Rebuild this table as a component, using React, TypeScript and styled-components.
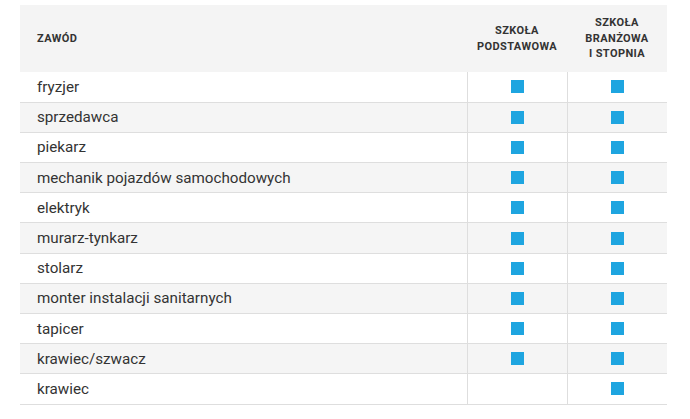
import React from "react";
import styled, { createGlobalStyle } from "styled-components";

const Global = createGlobalStyle`
  html, body { margin: 0; padding: 0; background: #fff; }
  body { font-family: Roboto, "Noto Sans", sans-serif; color: #333; }
`;

const Page = styled.div`
  padding: 5px 0 0 20px;
`;

const Table = styled.table`
  width: 647px;
  border-collapse: collapse;
  table-layout: fixed;
`;

const HeadRow = styled.tr`
  background: #f4f4f4;
  height: 67px;
`;

const HeadCell = styled.th<{ $align?: "left" | "center" }>`
  padding: 0 ${(p) => (p.$align === "left" ? "17px" : "4px")};
  text-align: ${(p) => p.$align ?? "center"};
  vertical-align: middle;
  font-size: 11px;
  line-height: 15.5px;
  font-weight: 700;
  letter-spacing: 0.4px;
  text-transform: uppercase;
  color: #333;
`;

const Row = styled.tr<{ $odd: boolean }>`
  background: ${(p) => (p.$odd ? "#f5f5f5" : "#fff")};
  height: 30.2px;
  border-bottom: 1px solid #dedede;
`;

const NameCell = styled.td`
  padding: 0 0 0 17px;
  font-size: 15.2px;
  color: #333;
  vertical-align: middle;
  white-space: nowrap;
`;

const MarkCell = styled.td`
  text-align: center;
  vertical-align: middle;
  border-left: 1px solid #dedede;
  padding: 0;
  line-height: 0;
`;

const Mark = styled.span`
  display: inline-block;
  width: 13px;
  height: 13px;
  background: #1ea5e0;
`;

const rows: [string, boolean, boolean][] = [
  ["fryzjer", true, true],
  ["sprzedawca", true, true],
  ["piekarz", true, true],
  ["mechanik pojazdów samochodowych", true, true],
  ["elektryk", true, true],
  ["murarz-tynkarz", true, true],
  ["stolarz", true, true],
  ["monter instalacji sanitarnych", true, true],
  ["tapicer", true, true],
  ["krawiec/szwacz", true, true],
  ["krawiec", false, true],
];

export default function App() {
  return (
    <Page>
      <Global />
      <Table>
        <colgroup>
          <col style={{ width: 447 }} />
          <col style={{ width: 100 }} />
          <col style={{ width: 100 }} />
        </colgroup>
        <thead>
          <HeadRow>
            <HeadCell $align="left">Zawód</HeadCell>
            <HeadCell>
              Szkoła
              <br />
              podstawowa
            </HeadCell>
            <HeadCell>
              Szkoła
              <br />
              branżowa
              <br />I stopnia
            </HeadCell>
          </HeadRow>
        </thead>
        <tbody>
          {rows.map(([name, a, b], i) => (
            <Row key={name} $odd={i % 2 === 1}>
              <NameCell>{name}</NameCell>
              <MarkCell>{a && <Mark />}</MarkCell>
              <MarkCell>{b && <Mark />}</MarkCell>
            </Row>
          ))}
        </tbody>
      </Table>
    </Page>
  );
}
